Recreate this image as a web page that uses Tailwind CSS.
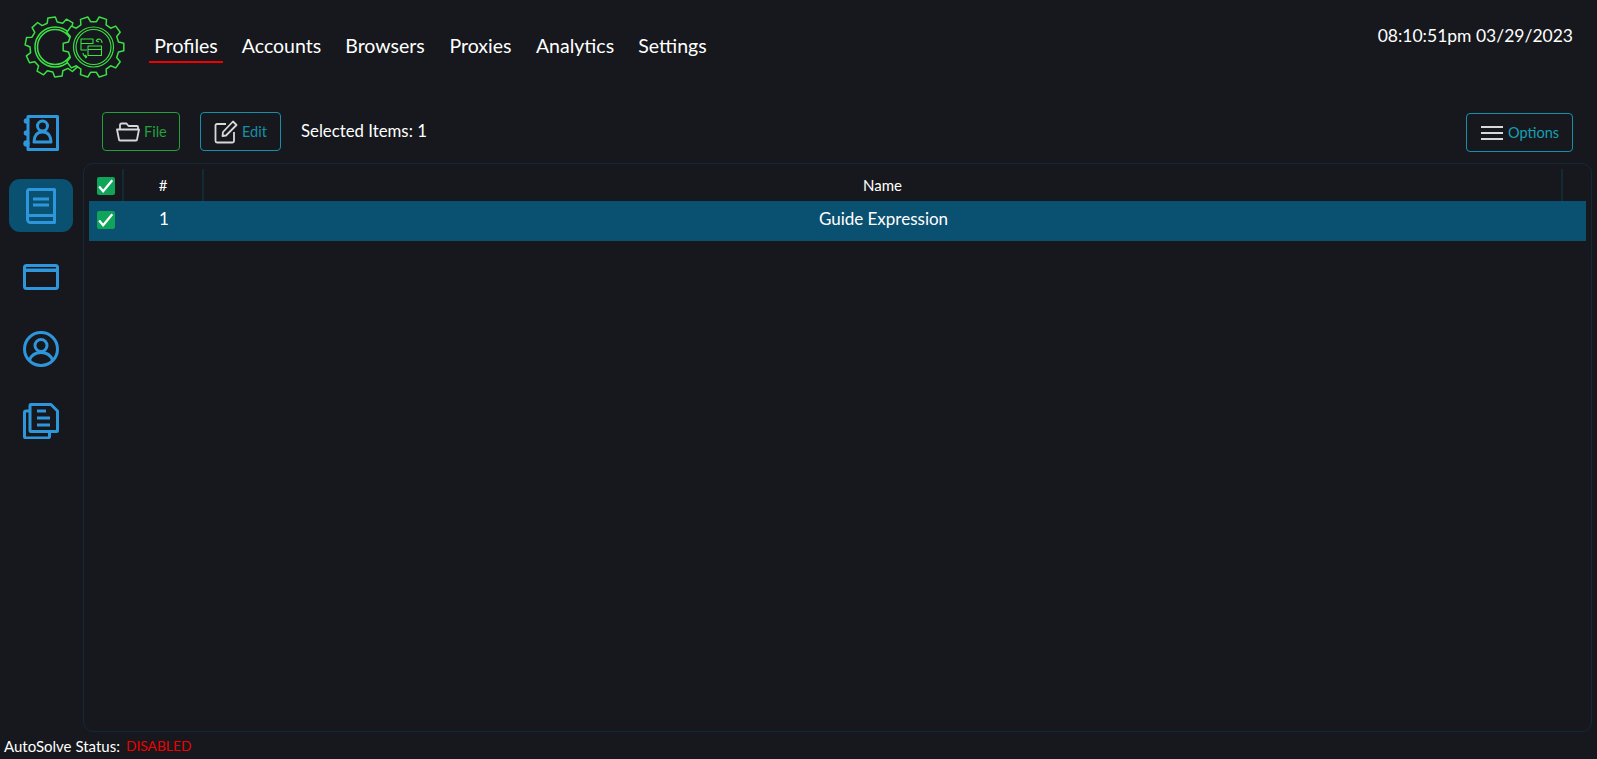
<!DOCTYPE html>
<html>
<head>
<meta charset="utf-8">
<script src="https://cdn.jsdelivr.net/npm/@tailwindcss/browser@4"></script>
</head>
<body class="bg-[#16181d] text-white font-['Lato','Liberation_Sans',sans-serif] overflow-hidden">
<div class="h-[759px] w-[1597px] flex flex-col">

  <!-- top bar -->
  <header class="h-[100px] flex shrink-0">
    <svg class="ml-[20px] mt-[10px] w-[108px] h-[74px]" viewBox="20 10 108 74" fill="none">
      <g stroke="#3be044" stroke-width="1.5" stroke-linejoin="round">
        <path id="gear_left" fill="#16181d"/>
        <circle cx="55" cy="47" r="20"/>
        <circle cx="55" cy="47" r="17.5"/>
        <path id="gear_right" fill="#16181d"/>
        <circle cx="93.500" cy="47" r="20" stroke-width="1.2"/>
        <circle cx="93.500" cy="47" r="17.5" stroke-width="1.2"/>
        <g stroke-width="1.1">
          <path d="M81 39h12v4.500h-12zM81 43.500v6.500h6"/>
          <path d="M88 46h13.500v9.500h-13.500zM88 49.500h13.500"/>
          <path d="M96 41l2-2M98 39c2 0 4 1 4 4M96 41l3 1"/>
          <path d="M83 53c0 2 2 4 4 4M87 57l-2 1M87 57l-2-2"/>
        </g>
      </g>
    </svg>
    <nav class="ml-[21px] mt-[29px] flex h-[34px] text-[19.5px]">
      <a class="w-[74px] h-[34px] leading-[34px] text-center border-b-2 border-[#f00000]">Profiles</a>
      <a class="ml-[14px] w-[89px] leading-[34px] text-center">Accounts</a>
      <a class="ml-[14px] w-[90px] leading-[34px] text-center">Browsers</a>
      <a class="ml-[14px] w-[73px] leading-[34px] text-center">Proxies</a>
      <a class="ml-[14px] w-[88px] leading-[34px] text-center">Analytics</a>
      <a class="ml-[14px] w-[79px] leading-[34px] text-center">Settings</a>
    </nav>
    <div class="ml-auto mr-[24px] mt-[24px] text-[17.5px] leading-[24px]">08:10:51pm 03/29/2023</div>
  </header>

  <div class="flex flex-1 min-h-0">
    <!-- side icons -->
    <aside class="w-[83px] shrink-0 flex flex-col items-start pl-[9px] text-[#2e97dc]">
      <div class="w-[64px] h-[36px] mt-[15px] flex justify-center">
        <svg class="w-[36px] h-[36px]" viewBox="0 0 36 36" fill="none" stroke="currentColor" stroke-width="3" stroke-linejoin="round">
          <path d="M5 1.500h29.500v33H5z"/>
          <circle cx="3.500" cy="6" r="2.800" fill="currentColor" stroke="none"/>
          <circle cx="3.500" cy="18" r="2.800" fill="currentColor" stroke="none"/>
          <circle cx="3.500" cy="28.500" r="3.200" fill="currentColor" stroke="none"/>
          <circle cx="19.500" cy="11" r="5"/>
          <path d="M11 27c0-6 3-10 8.500-10s8.500 4 8.500 10z"/>
        </svg>
      </div>
      <div class="w-[64px] h-[53px] mt-[28px] rounded-[11px] bg-[#0a5071] flex items-center justify-center">
        <svg class="w-[30px] h-[36px]" viewBox="0 0 30 36" fill="none" stroke="currentColor" stroke-width="3" stroke-linejoin="round">
          <path d="M3 1.500h25.500v33H4.500a3 3 0 0 1-3-3V3a1.500 1.500 0 0 1 1.500-1.500z"/>
          <path d="M1.500 27.500h27M7 11h16M7 17h16"/>
        </svg>
      </div>
      <div class="w-[64px] h-[26px] mt-[32px] flex justify-center">
        <svg class="w-[36px] h-[26px]" viewBox="0 0 36 26" fill="none" stroke="currentColor" stroke-width="3" stroke-linejoin="round">
          <rect x="1.500" y="1.500" width="33" height="23" rx="2"/>
          <path d="M1.500 6.200h33" stroke-width="3.500"/>
        </svg>
      </div>
      <div class="w-[64px] h-[36px] mt-[41px] flex justify-center">
        <svg class="w-[36px] h-[36px]" viewBox="0 0 36 36" fill="none" stroke="currentColor" stroke-width="3">
          <circle cx="18" cy="18" r="16.500"/>
          <circle cx="18" cy="14.500" r="6"/>
          <path d="M6.500 29c2-5 6.500-7.500 11.500-7.500s9.500 2.500 11.500 7.500"/>
        </svg>
      </div>
      <div class="w-[64px] h-[36px] mt-[36px] flex justify-center">
        <svg class="w-[36px] h-[36px]" viewBox="0 0 36 36" fill="none" stroke="currentColor" stroke-width="3" stroke-linejoin="round">
          <path d="M8 1.500h20l6.500 6.500v19.500a1 1 0 0 1-1 1H8a1 1 0 0 1-1-1V2.500a1 1 0 0 1 1-1z"/>
          <path d="M7 8H3a1.500 1.500 0 0 0-1.500 1.500v24A1.500 1.500 0 0 0 3 35h22a1.500 1.500 0 0 0 1.500-1.500V29"/>
          <path d="M14 8h9M14 15h13M14 22h13"/>
        </svg>
      </div>
    </aside>

    <!-- main -->
    <main class="flex-1 min-w-0 pr-[5px] flex flex-col">
      <div class="flex items-start h-[63px] pt-[12px] pl-[19px]">
        <button class="w-[78px] h-[39px] rounded-[4px] border border-[#22a03a] flex items-center pl-[13px] gap-[4px]">
          <svg class="w-[24px] h-[20px]" viewBox="0 0 24 20" fill="none" stroke="#d8d8d8" stroke-width="1.800" stroke-linejoin="round">
            <path d="M4 7V3a1.500 1.500 0 0 1 1.500-1.500h5l2 2.500H21a1 1 0 0 1 1 1v2"/>
            <path d="M1 7.500h22l-2 10a1 1 0 0 1-1 1H4a1 1 0 0 1-1-1z"/>
          </svg>
          <span class="text-[14.5px] text-[#22a03a]">File</span>
        </button>
        <button class="ml-[20px] w-[81px] h-[39px] rounded-[4px] border border-[#1590a8] flex items-center pl-[13px] gap-[4px]">
          <svg class="w-[24px] h-[24px]" viewBox="0 0 24 24" fill="none" stroke="#d8d8d8" stroke-width="1.800" stroke-linejoin="round">
            <path d="M12 4H3a1.500 1.500 0 0 0-1.500 1.500v15.500A1.500 1.500 0 0 0 3 22.500h15.500A1.500 1.500 0 0 0 20 21v-9"/>
            <path d="M9 12l10-10.500 3.500 3.500L12 15.500l-3.500.5z"/>
          </svg>
          <span class="text-[14.5px] text-[#1590a8]">Edit</span>
        </button>
        <span class="ml-[20px] mt-[8px] text-[16.800px] leading-[22px]">Selected Items: 1</span>
        <button class="ml-auto mt-[1px] w-[107px] h-[39px] rounded-[4px] border border-[#1590a8] flex items-center pl-[14px] gap-[5px] mr-[19px]">
          <svg class="w-[22px] h-[16px]" viewBox="0 0 22 16" fill="none" stroke="#d8d8d8" stroke-width="2">
            <path d="M0 2h22M0 8h22M0 14h22"/>
          </svg>
          <span class="text-[14.5px] text-[#16a0b4]">Options</span>
        </button>
      </div>

      <!-- table -->
      <section class="h-[570px] rounded-[10px] border border-[#122a36] pt-[5px] pl-[5px] pr-[5px]">
        <div class="flex h-[32px] text-[15px] items-stretch">
          <div class="w-[35px] flex items-center pl-[8px] pt-[2px] border-r-2 border-[#122a36]">
            <span class="w-[18px] h-[18px] rounded-[2px] bg-[#10a35a] flex items-center justify-center">
              <svg class="w-[16px] h-[16px]" viewBox="0 0 14 14" fill="none" stroke="white" stroke-width="2"><path d="M1 7.500l3.500 4 8-9.500"/></svg>
            </span>
          </div>
          <div class="w-[80px] flex items-center justify-center border-r-2 border-[#122a36]">#</div>
          <div class="flex-1 flex items-center justify-center border-r-2 border-[#122a36]">Name</div>
          <div class="w-[23px]"></div>
        </div>
        <div class="flex h-[40px] bg-[#0a5071] items-center text-[17px]">
          <div class="w-[35px] pl-[8px] pb-[2px]">
            <span class="w-[18px] h-[18px] rounded-[2px] bg-[#10a35a] flex items-center justify-center">
              <svg class="w-[16px] h-[16px]" viewBox="0 0 14 14" fill="none" stroke="white" stroke-width="2"><path d="M1 7.500l3.500 4 8-9.500"/></svg>
            </span>
          </div>
          <div class="w-[80px] text-center pb-[4px]">1</div>
          <div class="flex-1 text-center pr-[23px] pb-[4px]">Guide Expression</div>
        </div>
      </section>
    </main>
  </div>

  <footer class="h-[27px] shrink-0 flex pl-[4px] pt-[5px] text-[15px] leading-[18px]">
    <span>AutoSolve Status:</span>
    <span class="ml-[6px] text-[13.800px] text-[#f00000]">DISABLED</span>
  </footer>
</div>

<script>
// gear outline, teeth are trapezoids round the rim
function gearPath(cx, cy, outer, inner, teeth, start) {
  const step = Math.PI * 2 / teeth;
  const pts = [];
  for (let i = 0; i < teeth; i++) {
    const a = start + i * step;
    [[inner, -0.32], [outer, -0.2], [outer, 0.2], [inner, 0.32]].forEach(([r, off]) => {
      const t = a + off * step;
      pts.push((cx + r * Math.cos(t)).toFixed(1) + ' ' + (cy + r * Math.sin(t)).toFixed(1));
    });
  }
  return 'M' + pts.join('L') + 'Z';
}
document.getElementById('gear_left').setAttribute('d', gearPath(55, 47, 30, 25, 10, 0.2));
document.getElementById('gear_right').setAttribute('d', gearPath(93.5, 47, 30.5, 25.5, 10, 0));
</script>
</body>
</html>
